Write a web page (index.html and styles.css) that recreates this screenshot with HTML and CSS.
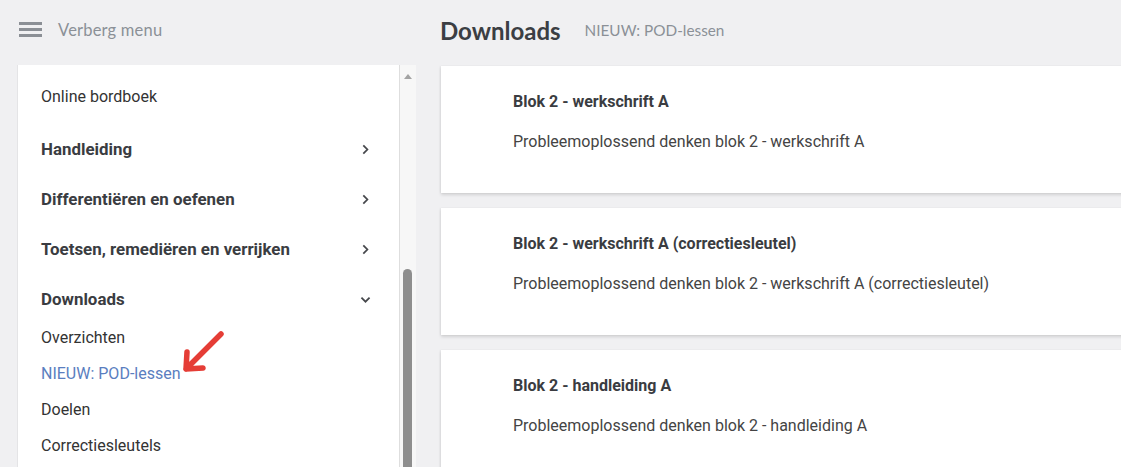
FILE: index.html
```html
<!DOCTYPE html>
<html lang="nl">
<head>
  <meta charset="UTF-8">
  <title>Downloads - NIEUW: POD-lessen</title>
  <link rel="stylesheet" href="styles.css">
</head>
<body>
  <div class="page">
    <aside class="side">
      <div class="menuToggle">
        <span class="burger"><i></i><i></i><i></i></span>
        <span class="menuLabel">Verberg menu</span>
      </div>

      <div class="sidePanel">
        <nav class="nav">
          <a class="navLink plain">Online bordboek</a>
          <a class="navLink group">Handleiding
            <svg class="chev" viewBox="0 0 10 10"><path d="M3 1.3 L6.7 5 L3 8.7"/></svg>
          </a>
          <a class="navLink group">Differentiëren en oefenen
            <svg class="chev" viewBox="0 0 10 10"><path d="M3 1.3 L6.7 5 L3 8.7"/></svg>
          </a>
          <a class="navLink group">Toetsen, remediëren en verrijken
            <svg class="chev" viewBox="0 0 10 10"><path d="M3 1.3 L6.7 5 L3 8.7"/></svg>
          </a>
          <a class="navLink group">Downloads
            <svg class="chev" viewBox="0 0 10 10"><path d="M1.3 3.3 L5 7 L8.7 3.3"/></svg>
          </a>
          <ul class="subList">
            <li><a>Overzichten</a></li>
            <li><a class="active">NIEUW: POD-lessen</a></li>
            <li><a>Doelen</a></li>
            <li><a>Correctiesleutels</a></li>
          </ul>
        </nav>
        <div class="scrollbar">
          <span class="scrollUp"></span>
          <span class="scrollThumb"></span>
        </div>

        <svg class="pointer" viewBox="0 0 60 60">
          <path d="M47 4 L12 39 M13 22 L12 39 L29 38"/>
        </svg>
      </div>
    </aside>

    <main class="main">
      <div class="mainHeader">
        <h1>Downloads</h1>
        <span class="crumb">NIEUW: POD-lessen</span>
      </div>

      <div class="cards">
        <div class="card">
          <h3>Blok 2 - werkschrift A</h3>
          <p>Probleemoplossend denken blok 2 - werkschrift A</p>
        </div>
        <div class="card">
          <h3>Blok 2 - werkschrift A (correctiesleutel)</h3>
          <p>Probleemoplossend denken blok 2 - werkschrift A (correctiesleutel)</p>
        </div>
        <div class="card">
          <h3>Blok 2 - handleiding A</h3>
          <p>Probleemoplossend denken blok 2 - handleiding A</p>
        </div>
      </div>
    </main>
  </div>
</body>
</html>
```

FILE: styles.css
```css
body, html {
  margin: 0;
  padding: 0;
  height: 100%;
  overflow: hidden;
  background: #f0f0f2;
}

.page {
  display: grid;
  grid-template-columns: 399px 1fr;
  column-gap: 25px;
  padding-left: 17px;
  height: 100vh;
}

/* left side */

.side {
  display: flex;
  flex-direction: column;
  min-height: 0;
}

.menuToggle {
  height: 65px;
  display: flex;
  align-items: center;
  padding-left: 2px;
  gap: 16px;
  box-sizing: border-box;
  padding-bottom: 6px;
}

.burger {
  display: flex;
  flex-direction: column;
  gap: 3.5px;
  width: 23px;
}

.burger i {
  display: block;
  height: 2.5px;
  background: #8b8f95;
}

.menuLabel {
  font-family: Lato, "Liberation Sans", sans-serif;
  font-size: 16.5px;
  color: #8b9097;
  letter-spacing: 0.2px;
}

.sidePanel {
  position: relative;
  flex: 1;
  display: flex;
  min-height: 0;
}

.nav {
  flex: 1;
  background: #fff;
  border-left: 1px solid #e4e4e6;
  padding: 6px 0 0 23px;
  font-family: Roboto, "Liberation Sans", sans-serif;
  color: #333;
}

.navLink {
  display: flex;
  align-items: center;
  justify-content: space-between;
  height: 50px;
  padding-right: 28px;
  font-size: 16px;
}

.navLink.plain {
  margin-bottom: 3px;
}

.navLink.group {
  font-weight: 700;
  font-size: 16.9px;
  color: #3a3c41;
}

.chev {
  width: 11px;
  height: 11px;
  fill: none;
  stroke: #45474b;
  stroke-width: 1.6;
}

.subList {
  list-style: none;
  margin: -5px 0 0;
  padding: 0;
}

.subList li a {
  display: flex;
  align-items: center;
  height: 36px;
  font-size: 16px;
}

.subList .active {
  color: #5a7ec0;
}

.scrollbar {
  width: 16px;
  background: #f7f7f7;
  border-left: 1px solid #dedede;
  position: relative;
}

.scrollUp {
  position: absolute;
  top: 9px;
  left: 4px;
  border-left: 4px solid transparent;
  border-right: 4px solid transparent;
  border-bottom: 5px solid #a3a3a3;
}

.scrollThumb {
  position: absolute;
  top: 204px;
  bottom: 0;
  left: 3px;
  width: 9px;
  border-radius: 5px 5px 0 0;
  background: #8e8e8e;
}

.pointer {
  position: absolute;
  left: 157px;
  top: 265px;
  width: 60px;
  height: 60px;
  fill: none;
  stroke: #e53d36;
  stroke-width: 5.5;
  stroke-linecap: round;
  stroke-linejoin: round;
}

/* main */

.main {
  min-width: 0;
  display: flex;
  flex-direction: column;
}

.mainHeader {
  height: 66px;
  display: flex;
  align-items: center;
  gap: 24px;
  padding-bottom: 6px;
  box-sizing: border-box;
  margin-left: -1px;
}

.mainHeader h1 {
  margin: 0;
  font-family: Lato, "Liberation Sans", sans-serif;
  font-weight: 700;
  font-size: 24px;
  color: #3b3e43;
}

.crumb {
  font-family: Lato, "Liberation Sans", sans-serif;
  font-size: 15.3px;
  color: #8b9097;
}

.cards {
  display: flex;
  flex-direction: column;
  gap: 15px;
  margin-right: -30px;
}

.card {
  height: 127px;
  background: #fff;
  box-shadow: 0 2px 3px rgba(0, 0, 0, 0.13), -1px 0 2px rgba(0, 0, 0, 0.05);
  padding: 27px 72px 0;
  box-sizing: border-box;
  font-family: Roboto, "Liberation Sans", sans-serif;
  color: #3a3c41;
}

.card h3 {
  margin: 0;
  font-size: 16px;
  font-weight: 700;
  line-height: 18px;
}

.card p {
  margin: 22px 0 0;
  font-size: 16px;
  line-height: 18px;
  color: #444;
}
```
